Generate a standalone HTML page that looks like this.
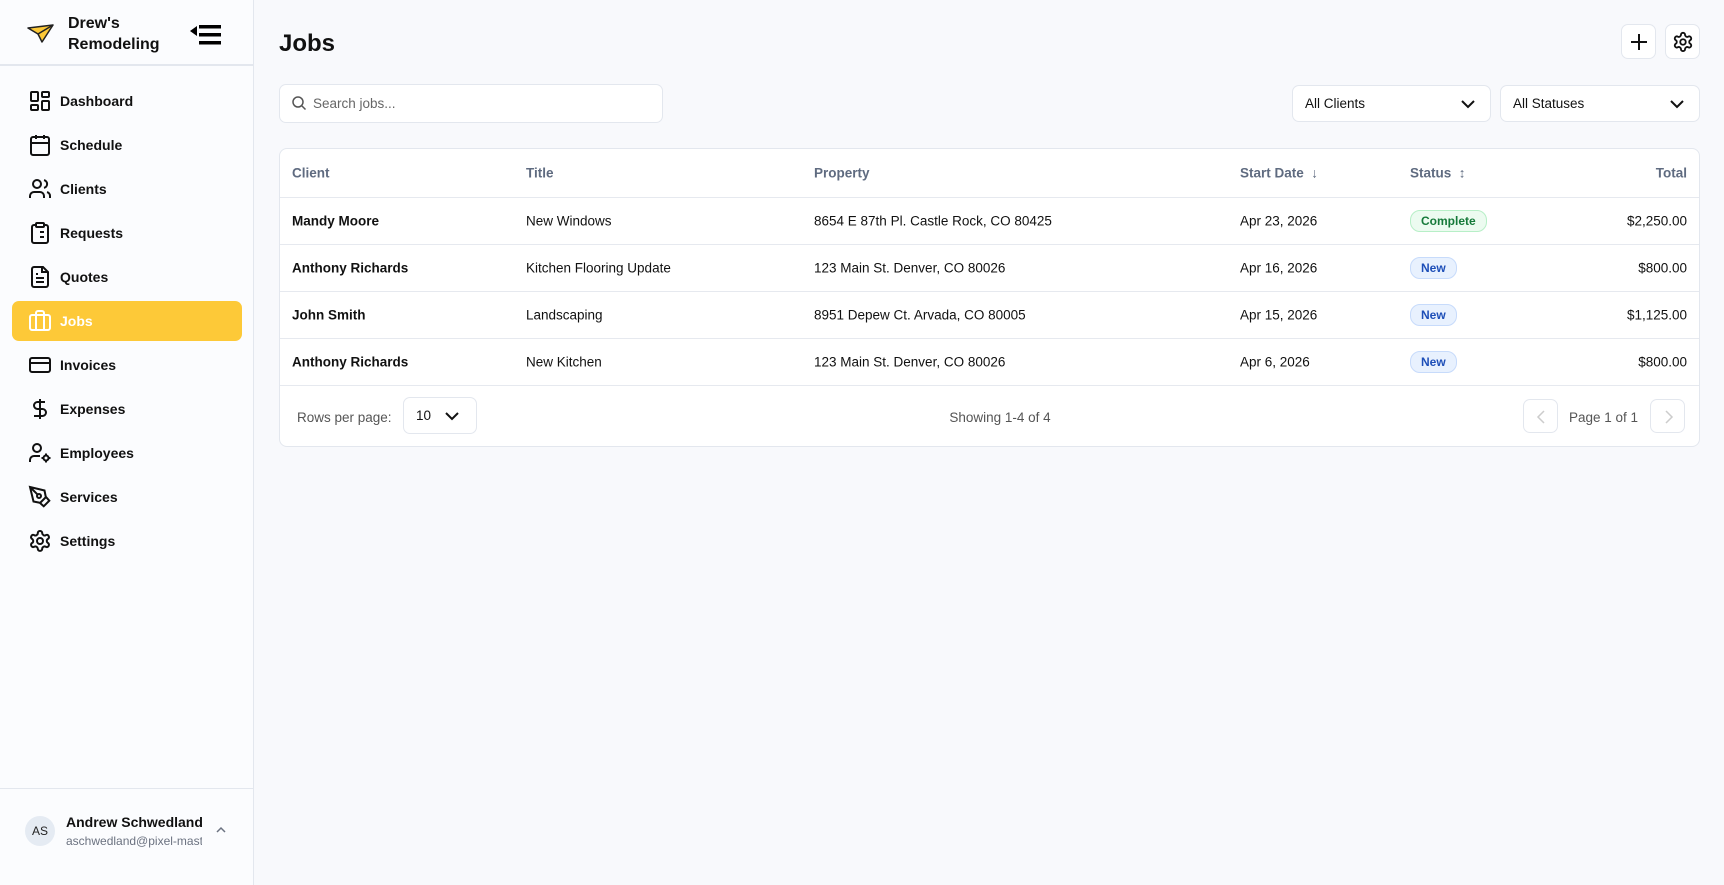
<!DOCTYPE html>
<html><head><meta charset="utf-8"><style>
*{box-sizing:border-box;margin:0;padding:0}
body{width:1724px;height:885px;overflow:hidden;background:#f8f9fc;font-family:"Liberation Sans",sans-serif;color:#111;position:relative}
.abs{position:absolute}
.side{left:0;top:0;width:254px;height:885px;background:#fbfcfe;border-right:1px solid #e3e7ee}
.nav{position:absolute;left:12px;width:230px;height:40px;display:flex;align-items:center;font-size:14px;font-weight:bold;color:#111;border-radius:7px}
.nav svg{position:absolute;left:16px;width:24px;height:24px}
.nav span{position:absolute;left:48px}
.nav.on{background:#fdc938;color:#fff}
.card{left:279px;top:148px;width:1421px;height:299px;background:#fff;border:1px solid #e3e7ee;border-radius:8px}
.row{position:absolute;left:0;width:1419px;border-bottom:1px solid #e6e9ef}
.c{position:absolute;font-size:13.5px;top:50%;transform:translateY(-50%);white-space:nowrap}
.h{color:#5f6b80;font-weight:bold;font-size:13.5px}
.b{font-weight:bold}
.badge{position:absolute;top:50%;transform:translateY(-50%);font-size:12px;font-weight:bold;border-radius:10px;padding:3px 10px}
.new{background:#e8f1fe;color:#1e4fb8;border:1px solid #c7dbfb}
.comp{background:#ecfbf0;color:#167a3a;border:1px solid #b7efc7}
.box{background:#fff;border:1px solid #e3e7ee;border-radius:7px}
</style></head><body>
<div class="abs side">
  <svg class="abs" style="left:27px;top:24px" width="27" height="19" viewBox="0 0 27 19"><path d="M1 4 L26 1 L15 18 L11 10 Z" fill="#fdc938" stroke="#222" stroke-width="1.5" stroke-linejoin="round"/><path d="M11 10 L26 1" stroke="#222" stroke-width="1.5"/></svg>
  <div class="abs" style="left:68px;top:13px;font-size:16px;font-weight:bold;line-height:21px;color:#111">Drew's<br>Remodeling</div>
  <svg class="abs" style="left:190px;top:24px" width="42" height="22" viewBox="0 0 42 22"><path d="M0 7 L7 2 L7 12Z" fill="#000"/><rect x="9" y="1" width="22" height="3.5" fill="#000"/><rect x="9" y="9" width="22" height="3.5" fill="#000"/><rect x="9" y="17" width="22" height="3.5" fill="#000"/></svg>
  <div class="abs" style="left:0;top:64px;width:254px;height:2px;background:#e3e7ee"></div>
  <div class="nav" style="top:81px"><svg viewBox="0 0 24 24" fill="none" stroke="#111" stroke-width="2"><rect x="3" y="3" width="7" height="9" rx="1"/><rect x="14" y="3" width="7" height="5" rx="1"/><rect x="14" y="12" width="7" height="9" rx="1"/><rect x="3" y="16" width="7" height="5" rx="1"/></svg><span>Dashboard</span></div>
  <div class="nav" style="top:125px"><svg viewBox="0 0 24 24" fill="none" stroke="#111" stroke-width="2"><rect x="3" y="4" width="18" height="18" rx="2"/><path d="M16 2v4M8 2v4M3 10h18"/></svg><span>Schedule</span></div>
  <div class="nav" style="top:169px"><svg viewBox="0 0 24 24" fill="none" stroke="#111" stroke-width="2"><path d="M16 21v-2a4 4 0 0 0-4-4H6a4 4 0 0 0-4 4v2"/><circle cx="9" cy="7" r="4"/><path d="M22 21v-2a4 4 0 0 0-3-3.9M16 3.1a4 4 0 0 1 0 7.8"/></svg><span>Clients</span></div>
  <div class="nav" style="top:213px"><svg viewBox="0 0 24 24" fill="none" stroke="#111" stroke-width="2"><rect x="8" y="2" width="8" height="4" rx="1"/><path d="M16 4h2a2 2 0 0 1 2 2v14a2 2 0 0 1-2 2H6a2 2 0 0 1-2-2V6a2 2 0 0 1 2-2h2M12 11h4M12 16h4M8 11h.01M8 16h.01"/></svg><span>Requests</span></div>
  <div class="nav" style="top:257px"><svg viewBox="0 0 24 24" fill="none" stroke="#111" stroke-width="2"><path d="M15 2H6a2 2 0 0 0-2 2v16a2 2 0 0 0 2 2h12a2 2 0 0 0 2-2V7z"/><path d="M14 2v5h5M16 13H8M16 17H8M10 9H8"/></svg><span>Quotes</span></div>
  <div class="nav on" style="top:301px"><svg viewBox="0 0 24 24" fill="none" stroke="#fff" stroke-width="2"><rect x="2" y="6" width="20" height="15" rx="2"/><path d="M16 21V4a2 2 0 0 0-2-2h-4a2 2 0 0 0-2 2v17"/></svg><span>Jobs</span></div>
  <div class="nav" style="top:345px"><svg viewBox="0 0 24 24" fill="none" stroke="#111" stroke-width="2"><rect x="2" y="5" width="20" height="14" rx="2"/><path d="M2 10h20"/></svg><span>Invoices</span></div>
  <div class="nav" style="top:389px"><svg viewBox="0 0 24 24" fill="none" stroke="#111" stroke-width="2"><path d="M12 2v20M17 5H9.5a3.5 3.5 0 0 0 0 7h5a3.5 3.5 0 0 1 0 7H6"/></svg><span>Expenses</span></div>
  <div class="nav" style="top:433px"><svg viewBox="0 0 24 24" fill="none" stroke="#111" stroke-width="2"><circle cx="9" cy="7" r="4"/><path d="M2 21v-2a4 4 0 0 1 4-4h6"/><circle cx="18" cy="17" r="2.5"/><path d="M18 12.5v1.5M18 20v1.5M13.5 17H15M21 17h1.5"/></svg><span>Employees</span></div>
  <div class="nav" style="top:477px"><svg viewBox="0 0 24 24" fill="none" stroke="#111" stroke-width="2"><path d="M15.7 21.3 21.3 15.7 18 12 12 18zM18 13l-1.5-7.5L2 2l3.5 14.5L13 18M2 2l7.6 7.6"/><circle cx="11" cy="11" r="2"/></svg><span>Services</span></div>
  <div class="nav" style="top:521px"><svg viewBox="0 0 24 24" fill="none" stroke="#111" stroke-width="2"><path d="M12.2 2h-.4a2 2 0 0 0-2 2v.2a2 2 0 0 1-1 1.7l-.4.3a2 2 0 0 1-2 0l-.2-.1a2 2 0 0 0-2.7.7l-.2.4a2 2 0 0 0 .7 2.7l.2.1a2 2 0 0 1 1 1.7v.5a2 2 0 0 1-1 1.7l-.2.1a2 2 0 0 0-.7 2.7l.2.4a2 2 0 0 0 2.7.7l.2-.1a2 2 0 0 1 2 0l.4.3a2 2 0 0 1 1 1.7v.2a2 2 0 0 0 2 2h.4a2 2 0 0 0 2-2v-.2a2 2 0 0 1 1-1.7l.4-.3a2 2 0 0 1 2 0l.2.1a2 2 0 0 0 2.7-.7l.2-.4a2 2 0 0 0-.7-2.7l-.2-.1a2 2 0 0 1-1-1.7v-.5a2 2 0 0 1 1-1.7l.2-.1a2 2 0 0 0 .7-2.7l-.2-.4a2 2 0 0 0-2.7-.7l-.2.1a2 2 0 0 1-2 0l-.4-.3a2 2 0 0 1-1-1.7V4a2 2 0 0 0-2-2z"/><circle cx="12" cy="12" r="3"/></svg><span>Settings</span></div>
  <div class="abs" style="left:0;top:788px;width:254px;height:1px;background:#e3e7ee"></div>
  <div class="abs" style="left:25px;top:816px;width:30px;height:30px;border-radius:50%;background:#e5ebf3;font-size:12px;display:flex;align-items:center;justify-content:center;color:#222">AS</div>
  <div class="abs" style="left:66px;top:814px;font-size:14px;font-weight:bold;color:#111">Andrew Schwedland</div>
  <div class="abs" style="left:66px;top:834px;width:136px;overflow:hidden;white-space:nowrap;font-size:12px;color:#6b7280">aschwedland@pixel-masters.com</div>
  <svg class="abs" style="left:215px;top:826px" width="12" height="8" viewBox="0 0 12 8"><path d="M2 6l4-4 4 4" fill="none" stroke="#6b7280" stroke-width="1.5"/></svg>
</div>

<div class="abs" style="left:279px;top:30px;font-size:24px;font-weight:bold;color:#111">Jobs</div>
<div class="abs box" style="left:1621px;top:24px;width:35px;height:35px"><svg style="position:absolute;left:7px;top:7px" width="20" height="20" viewBox="0 0 20 20"><path d="M10 2v16M2 10h16" stroke="#111" stroke-width="2"/></svg></div>
<div class="abs box" style="left:1665px;top:24px;width:35px;height:35px"><svg style="position:absolute;left:6px;top:6px" width="22" height="22" viewBox="0 0 24 24" fill="none" stroke="#111" stroke-width="2"><path d="M12.2 2h-.4a2 2 0 0 0-2 2v.2a2 2 0 0 1-1 1.7l-.4.3a2 2 0 0 1-2 0l-.2-.1a2 2 0 0 0-2.7.7l-.2.4a2 2 0 0 0 .7 2.7l.2.1a2 2 0 0 1 1 1.7v.5a2 2 0 0 1-1 1.7l-.2.1a2 2 0 0 0-.7 2.7l.2.4a2 2 0 0 0 2.7.7l.2-.1a2 2 0 0 1 2 0l.4.3a2 2 0 0 1 1 1.7v.2a2 2 0 0 0 2 2h.4a2 2 0 0 0 2-2v-.2a2 2 0 0 1 1-1.7l.4-.3a2 2 0 0 1 2 0l.2.1a2 2 0 0 0 2.7-.7l.2-.4a2 2 0 0 0-.7-2.7l-.2-.1a2 2 0 0 1-1-1.7v-.5a2 2 0 0 1 1-1.7l.2-.1a2 2 0 0 0 .7-2.7l-.2-.4a2 2 0 0 0-2.7-.7l-.2.1a2 2 0 0 1-2 0l-.4-.3a2 2 0 0 1-1-1.7V4a2 2 0 0 0-2-2z"/><circle cx="12" cy="12" r="3"/></svg></div>

<div class="abs box" style="left:279px;top:84px;width:384px;height:39px"><svg style="position:absolute;left:11px;top:10px" width="16" height="16" viewBox="0 0 16 16" fill="none" stroke="#555" stroke-width="1.5"><circle cx="7" cy="7" r="5"/><path d="M11 11l3.5 3.5"/></svg><div style="position:absolute;left:33px;top:11px;font-size:13.5px;color:#666">Search jobs...</div></div>
<div class="abs box" style="left:1292px;top:85px;width:199px;height:37px"><div style="position:absolute;left:12px;top:10px;font-size:13.5px;color:#111">All Clients</div><svg style="position:absolute;right:14px;top:12px" width="16" height="12" viewBox="0 0 16 12"><path d="M2 3l6 6 6-6" fill="none" stroke="#111" stroke-width="2"/></svg></div>
<div class="abs box" style="left:1500px;top:85px;width:200px;height:37px"><div style="position:absolute;left:12px;top:10px;font-size:13.5px;color:#111">All Statuses</div><svg style="position:absolute;right:14px;top:12px" width="16" height="12" viewBox="0 0 16 12"><path d="M2 3l6 6 6-6" fill="none" stroke="#111" stroke-width="2"/></svg></div>

<div class="abs card">
  <div class="row" style="top:0;height:49px">
    <div class="c h" style="left:12px">Client</div><div class="c h" style="left:246px">Title</div><div class="c h" style="left:534px">Property</div>
    <div class="c h" style="left:960px">Start Date &nbsp;<span style="font-weight:normal">↓</span></div>
    <div class="c h" style="left:1130px">Status &nbsp;<span style="font-weight:normal">↕</span></div>
    <div class="c h" style="right:12px">Total</div>
  </div>
  <div class="row" style="top:49px;height:47px"><div class="c b" style="left:12px">Mandy Moore</div><div class="c" style="left:246px">New Windows</div><div class="c" style="left:534px">8654 E 87th Pl. Castle Rock, CO 80425</div><div class="c" style="left:960px">Apr 23, 2026</div><div class="badge comp" style="left:1130px">Complete</div><div class="c" style="right:12px">$2,250.00</div></div>
  <div class="row" style="top:96px;height:47px"><div class="c b" style="left:12px">Anthony Richards</div><div class="c" style="left:246px">Kitchen Flooring Update</div><div class="c" style="left:534px">123 Main St. Denver, CO 80026</div><div class="c" style="left:960px">Apr 16, 2026</div><div class="badge new" style="left:1130px">New</div><div class="c" style="right:12px">$800.00</div></div>
  <div class="row" style="top:143px;height:47px"><div class="c b" style="left:12px">John Smith</div><div class="c" style="left:246px">Landscaping</div><div class="c" style="left:534px">8951 Depew Ct. Arvada, CO 80005</div><div class="c" style="left:960px">Apr 15, 2026</div><div class="badge new" style="left:1130px">New</div><div class="c" style="right:12px">$1,125.00</div></div>
  <div class="row" style="top:190px;height:47px"><div class="c b" style="left:12px">Anthony Richards</div><div class="c" style="left:246px">New Kitchen</div><div class="c" style="left:534px">123 Main St. Denver, CO 80026</div><div class="c" style="left:960px">Apr 6, 2026</div><div class="badge new" style="left:1130px">New</div><div class="c" style="right:12px">$800.00</div></div>
  <div style="position:absolute;left:17px;top:261px;font-size:13.5px;color:#555">Rows per page:</div>
  <div class="box" style="position:absolute;left:123px;top:248px;width:74px;height:37px"><div style="position:absolute;left:12px;top:10px;font-size:13.5px">10</div><svg style="position:absolute;left:40px;top:12px" width="16" height="12" viewBox="0 0 16 12"><path d="M2 3l6 6 6-6" fill="none" stroke="#111" stroke-width="2"/></svg></div>
  <div style="position:absolute;left:0;width:1440px;text-align:center;top:261px;font-size:13.5px;color:#555">Showing 1-4 of 4</div>
  <div class="box" style="position:absolute;left:1243px;top:250px;width:35px;height:34px"><svg style="position:absolute;left:11px;top:9px" width="12" height="16" viewBox="0 0 12 16"><path d="M9 2L3 8l6 6" fill="none" stroke="#ccc" stroke-width="1.5"/></svg></div>
  <div style="position:absolute;left:1289px;top:261px;font-size:13.5px;color:#555">Page 1 of 1</div>
  <div class="box" style="position:absolute;left:1370px;top:250px;width:35px;height:34px"><svg style="position:absolute;left:12px;top:9px" width="12" height="16" viewBox="0 0 12 16"><path d="M3 2l6 6-6 6" fill="none" stroke="#ccc" stroke-width="1.5"/></svg></div>
</div>
</body></html>
